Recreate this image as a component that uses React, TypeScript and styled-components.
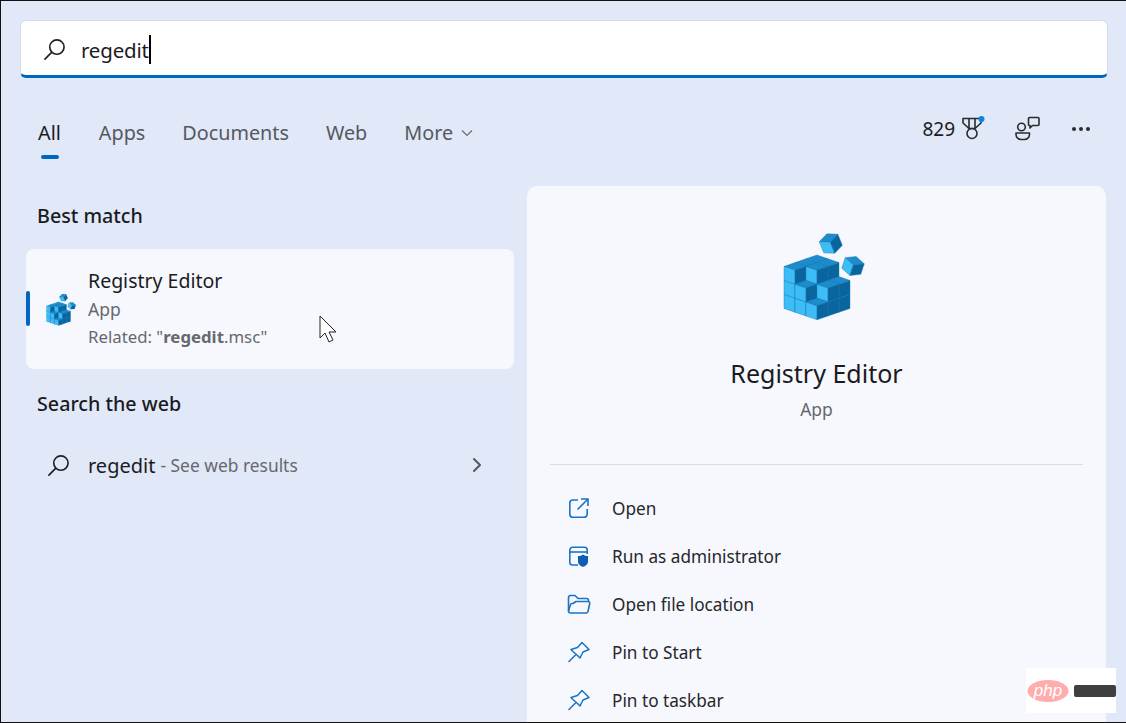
import React from 'react';
import styled, { createGlobalStyle } from 'styled-components';

const GlobalStyle = createGlobalStyle`
  html, body { margin: 0; padding: 0; background: #e1e8f7; }
  * { box-sizing: border-box; }
`;

const Page = styled.div`
  position: relative;
  width: 1126px;
  height: 723px;
  overflow: hidden;
  display: flex;
  flex-direction: column;
  padding: 19px 18px 0 19px;
  background: #e1e8f7;
  border-top: 1px solid #111;
  border-left: 1px solid #111;
  border-bottom: 1px solid #111;
  font-family: 'Noto Sans', 'Open Sans', sans-serif;
  color: #1b1b1f;
`;

const SearchBar = styled.div`
  height: 58px;
  flex: none;
  display: flex;
  align-items: center;
  padding: 3px 0 0 22px;
  background: #fff;
  border-radius: 6px;
  border: 1px solid #d4dcec;
  border-bottom: 3px solid #0067c0;
  font-size: 20.5px;
`;

const SearchText = styled.span`
  margin-left: 15px;
  letter-spacing: -0.2px;
`;

const Caret = styled.span`
  display: inline-block;
  width: 2px;
  height: 29px;
  background: #000;
`;

const NavRow = styled.div`
  flex: none;
  display: flex;
  align-items: center;
  justify-content: space-between;
  height: 108px;
  padding: 0 17px 0 18px;
`;

const Tabs = styled.div`
  display: flex;
  gap: 37px;
  margin-top: 2px;
`;

const Tab = styled.div<{ $active?: boolean }>`
  position: relative;
  display: flex;
  align-items: center;
  gap: 8px;
  margin-right: ${p => (p.$active ? 1 : 0)}px;
  font-size: 19.8px;
  line-height: 28px;
  color: ${p => (p.$active ? '#1b1b1f' : '#55585f')};
`;

const TabMark = styled.span`
  position: absolute;
  left: 3px;
  bottom: -12px;
  width: 18px;
  height: 4px;
  border-radius: 2px;
  background: #0067c0;
`;

const Tools = styled.div`
  display: flex;
  align-items: center;
  margin-bottom: 6px;
  font-size: 19px;
`;

const Body = styled.div`
  flex: 1;
  min-height: 0;
  display: grid;
  grid-template-columns: 488px 579px;
  gap: 13px;
  padding-left: 6px;
`;

const LeftColumn = styled.div`
  display: flex;
  flex-direction: column;
  padding-top: 16px;
`;

const SectionTitle = styled.h2<{ $gap: number }>`
  margin: 0 0 ${p => p.$gap}px 11px;
  font-size: 19.7px;
  line-height: 28px;
  font-weight: 500;
  color: #1b1b1f;
`;

const MatchCard = styled.div`
  position: relative;
  height: 120px;
  display: flex;
  align-items: center;
  padding-left: 17px;
  margin-bottom: 21px;
  background: #f6f8fe;
  border-radius: 8px;
`;

const MatchMark = styled.span`
  position: absolute;
  left: 0;
  top: 42px;
  width: 4px;
  height: 35px;
  border-radius: 2px;
  background: #0067c0;
`;

const MatchText = styled.div`
  margin: -2px 0 0 14px;
  display: flex;
  flex-direction: column;
`;

const MatchName = styled.div`
  font-size: 19.5px;
  line-height: 30px;
`;

const MatchSub = styled.div<{ $small?: boolean }>`
  font-size: ${p => (p.$small ? 16.8 : 17.5)}px;
  line-height: 27px;
  color: #66686e;
  b { font-weight: 700; }
`;

const Pointer = styled.svg`
  position: absolute;
  left: 293px;
  top: 66px;
`;

const WebRow = styled.div`
  display: flex;
  align-items: center;
  height: 34px;
  padding: 0 32px 0 21px;
`;

const WebQuery = styled.span`
  margin-left: 18px;
  font-size: 20px;
`;

const WebHint = styled.span`
  margin-left: 5px;
  flex: 1;
  font-size: 17.4px;
  color: #66686e;
`;

const DetailCard = styled.div`
  display: flex;
  flex-direction: column;
  align-items: center;
  height: 560px;
  padding: 45px 23px 0;
  background: #f6f8fe;
  border-radius: 10px;
`;

const DetailName = styled.div`
  margin-top: 34px;
  font-size: 25px;
  line-height: 36px;
`;

const DetailKind = styled.div`
  margin-top: 6px;
  font-size: 17.5px;
  line-height: 25px;
  color: #66686e;
`;

const Divider = styled.hr`
  width: 100%;
  margin: 42px 0 19px;
  border: 0;
  border-top: 1px solid #dadde4;
`;

const ActionList = styled.div`
  width: 100%;
  display: flex;
  flex-direction: column;
`;

const ActionRow = styled.div`
  height: 48px;
  display: flex;
  align-items: center;
  gap: 22px;
  padding-left: 18px;
  font-size: 17.2px;
  color: #26272b;
`;

const Watermark = styled.div`
  position: absolute;
  left: 1025px;
  top: 667px;
  width: 90px;
  height: 45px;
  display: flex;
  align-items: center;
  gap: 5px;
  padding-left: 1px;
  background: #fff;
`;

const WatermarkBar = styled.span`
  width: 42px;
  height: 12px;
  background: #3f3f3f;
  border-radius: 2px;
`;

type Cell = [number, number, number];

const heights = [
  [3, 3, 3],
  [3, 3, 2],
  [2, 2, 1],
];

function cubeFaces(cx: number, cy: number, a: number, b: number, c: number, key: string) {
  // cx, cy is the top corner of the top face
  const top = `${cx},${cy} ${cx + a},${cy + b} ${cx},${cy + 2 * b} ${cx - a},${cy + b}`;
  const left = `${cx - a},${cy + b} ${cx},${cy + 2 * b} ${cx},${cy + 2 * b + c} ${cx - a},${cy + b + c}`;
  const right = `${cx + a},${cy + b} ${cx},${cy + 2 * b} ${cx},${cy + 2 * b + c} ${cx + a},${cy + b + c}`;
  return (
    <g key={key} stroke="#1378b4" strokeWidth="0.4">
      <polygon points={top} fill="#1e8ccc" />
      <polygon points={left} fill="#3ebcf5" />
      <polygon points={right} fill="#0a659f" />
    </g>
  );
}

function RegistryIcon({ width, height }: { width: number; height: number }) {
  const cells: Cell[] = [];
  heights.forEach((row, i) =>
    row.forEach((h, j) => {
      for (let z = 0; z < h; z++) cells.push([i, j, z]);
    }),
  );
  const a = 11;
  const b = 3.8;
  const c = 14;
  return (
    <svg width={width} height={height} viewBox="15 12 84 90" style={{ flex: 'none', overflow: 'visible' }}>
      {cells.map(([i, j, z]) =>
        cubeFaces(57 + (i - j) * a, 36 + (i + j) * b + (2 - z) * c, a, b, c, `${i}-${j}-${z}`),
      )}
      <g transform="rotate(-22 71 25)">{cubeFaces(71, 14, 10, 4.5, 12, 'top')}</g>
      <g transform="rotate(18 93 47)">{cubeFaces(93, 37, 10, 4.5, 11, 'side')}</g>
    </svg>
  );
}

function SearchIcon({ size }: { size: number }) {
  return (
    <svg width={size} height={size} viewBox="0 0 24 24" fill="none" stroke="#1f1f22" strokeWidth="1.7" style={{ flex: 'none' }}>
      <circle cx="14.5" cy="9.5" r="7.5" />
      <path d="M9 15 2 22" strokeLinecap="round" />
    </svg>
  );
}

function MedalIcon() {
  return (
    <svg width="26" height="26" viewBox="0 0 26 26" fill="none" stroke="#2a2b2f" strokeWidth="1.6" style={{ marginLeft: 6 }}>
      <path d="M2 2.5h18v4.5l-6 5.5H8L2 7z" strokeLinejoin="round" />
      <path d="M8 3v9M14 3v9" />
      <circle cx="11" cy="17.5" r="5" />
      <circle cx="20.5" cy="3" r="3" fill="#0a84e0" stroke="none" />
    </svg>
  );
}

function FeedbackIcon() {
  return (
    <svg width="26" height="26" viewBox="0 0 26 26" fill="none" stroke="#2a2b2f" strokeWidth="1.6" style={{ marginLeft: 28 }}>
      <circle cx="6.5" cy="11" r="3.8" />
      <path d="M1 17h13.5v1.5c0 3-2.5 5-5 5H6c-2.500 0-5-2-5-5z" strokeLinejoin="round" />
      <path d="M13.500 2.500a1 1 0 0 1 1-1h8.500a1 1 0 0 1 1 1v6a1 1 0 0 1-1 1h-5.500l-2.500 2.500V9.500h-.5a1 1 0 0 1-1-1z" strokeLinejoin="round" />
    </svg>
  );
}

function MoreDots() {
  return (
    <svg width="20" height="6" viewBox="0 0 20 6" fill="#2a2b2f" style={{ marginLeft: 30 }}>
      <circle cx="3" cy="3" r="2" />
      <circle cx="10" cy="3" r="2" />
      <circle cx="17" cy="3" r="2" />
    </svg>
  );
}

const blue = '#1a73c5';

function OpenIcon() {
  return (
    <svg width="22" height="22" viewBox="0 0 22 22" fill="none" stroke={blue} strokeWidth="1.6">
      <path d="M10 3H5a3.200 3.200 0 0 0-3.200 3.200v11A3.200 3.200 0 0 0 5 20.300h11a3.200 3.200 0 0 0 3.200-3.200V12" />
      <path d="M13 2h7v7M20 2 9.500 12.500" />
    </svg>
  );
}

function AdminIcon() {
  return (
    <svg width="22" height="22" viewBox="0 0 22 22" fill="none" stroke={blue} strokeWidth="1.600">
      <path d="M10 20H4.500A2.700 2.700 0 0 1 1.800 17.300V5A2.700 2.700 0 0 1 4.500 2.300h12A2.700 2.700 0 0 1 19.200 5v4" />
      <path d="M2 7h17" />
      <path d="M15 9.500c1.500 1.200 3 1.500 5 1.500v5.500c0 3-2.500 4.500-5 5.500-2.500-1-5-2.500-5-5.500V11c2 0 3.500-.3 5-1.500z" fill="#0c5fb0" stroke="none" />
    </svg>
  );
}

function FolderIcon() {
  return (
    <svg width="24" height="22" viewBox="0 0 24 22" fill="none" stroke={blue} strokeWidth="1.600" style={{ marginLeft: -1, marginRight: -1 }}>
      <path d="M1.500 18V4.500A2 2 0 0 1 3.500 2.500h4.500l3 3h8.500a2 2 0 0 1 2 2V8" strokeLinejoin="round" />
      <path d="M1.500 18c0 1.500 1 2 2 2h15.500c1 0 1.700-.6 2-1.500l1.700-8c.2-1.200-.5-2-1.700-2H9l-3 2H5c-1 0-1.500.5-1.700 1.500z" strokeLinejoin="round" />
    </svg>
  );
}

function PinIcon() {
  return (
    <svg width="22" height="22" viewBox="0 0 22 22" fill="none" stroke={blue} strokeWidth="1.500">
      <path d="M14 1.500 21 8.500l-6 2.500-3 6-2.500-2.500L5.500 11 3 8.500 9.500 6.500z" strokeLinejoin="round" />
      <path d="M7.500 14 1 20.500" strokeLinecap="round" />
    </svg>
  );
}

function ChevronDownIcon() {
  return (
    <svg width="12" height="8" viewBox="0 0 12 8" fill="none" stroke="#6a6d74" strokeWidth="1.200">
      <path d="M1 1.500 6 6.500 11 1.500" />
    </svg>
  );
}

function ChevronRightIcon() {
  return (
    <svg width="10" height="16" viewBox="0 0 10 16" fill="none" stroke="#55585f" strokeWidth="2" strokeLinecap="round" strokeLinejoin="round">
      <path d="M2 2 8 8 2 14" />
    </svg>
  );
}

function PhpBadge() {
  return (
    <svg width="42" height="24" viewBox="0 0 42 24">
      <ellipse cx="21" cy="12" rx="20.500" ry="11" fill="#ffacac" />
      <text x="21" y="17" textAnchor="middle" fontFamily="'Liberation Sans', sans-serif" fontStyle="italic" fontSize="17" fill="#fff">
        php
      </text>
    </svg>
  );
}

const actions = [
  { label: 'Open', icon: <OpenIcon /> },
  { label: 'Run as administrator', icon: <AdminIcon /> },
  { label: 'Open file location', icon: <FolderIcon /> },
  { label: 'Pin to Start', icon: <PinIcon /> },
  { label: 'Pin to taskbar', icon: <PinIcon /> },
];

export default function App() {
  return (
    <Page>
      <GlobalStyle />
      <SearchBar>
        <SearchIcon size={23} />
        <SearchText>regedit</SearchText>
        <Caret />
      </SearchBar>
      <NavRow>
        <Tabs>
          <Tab $active>
            All
            <TabMark />
          </Tab>
          <Tab>Apps</Tab>
          <Tab>Documents</Tab>
          <Tab>Web</Tab>
          <Tab>
            More
            <ChevronDownIcon />
          </Tab>
        </Tabs>
        <Tools>
          829
          <MedalIcon />
          <FeedbackIcon />
          <MoreDots />
        </Tools>
      </NavRow>
      <Body>
        <LeftColumn>
          <SectionTitle $gap={19}>Best match</SectionTitle>
          <MatchCard>
            <MatchMark />
            <RegistryIcon width={31} height={33} />
            <MatchText>
              <MatchName>Registry Editor</MatchName>
              <MatchSub>App</MatchSub>
              <MatchSub $small>
                Related: "<b>regedit</b>.msc"
              </MatchSub>
            </MatchText>
            <Pointer width="18" height="28" viewBox="0 0 18 28">
              <path d="M1 1v22l5-5 4 9 4-2-4-8h7z" fill="#fff" stroke="#222" strokeWidth="1" strokeLinejoin="round" />
            </Pointer>
          </MatchCard>
          <SectionTitle $gap={30}>Search the web</SectionTitle>
          <WebRow>
            <SearchIcon size={23} />
            <WebQuery>regedit</WebQuery>
            <WebHint>- See web results</WebHint>
            <ChevronRightIcon />
          </WebRow>
        </LeftColumn>
        <DetailCard>
          <RegistryIcon width={84} height={90} />
          <DetailName>Registry Editor</DetailName>
          <DetailKind>App</DetailKind>
          <Divider />
          <ActionList>
            {actions.map(a => (
              <ActionRow key={a.label}>
                {a.icon}
                {a.label}
              </ActionRow>
            ))}
          </ActionList>
        </DetailCard>
      </Body>
      <Watermark>
        <PhpBadge />
        <WatermarkBar />
      </Watermark>
    </Page>
  );
}
